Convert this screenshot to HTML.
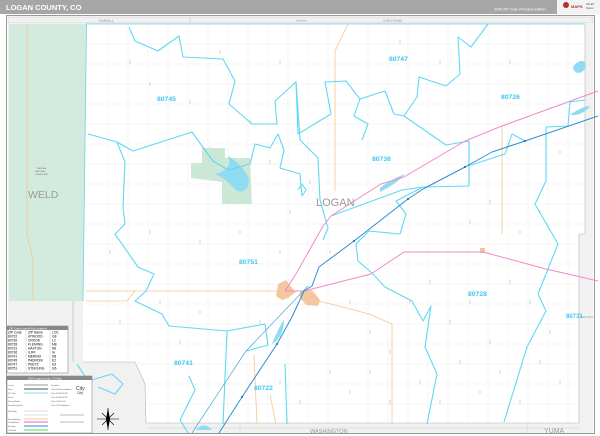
<!DOCTYPE html>
<html><head><meta charset="utf-8"><style>
html,body{margin:0;padding:0;background:#fff}
svg{display:block}
text{font-family:"Liberation Sans",sans-serif}
</style></head><body>
<svg width="600" height="436" viewBox="0 0 600 436" xmlns="http://www.w3.org/2000/svg">
<rect width="600" height="436" fill="#fff"/>
<!-- header -->
<rect x="0" y="0" width="600" height="14" fill="#a6a6a6"/>
<text x="6" y="10" font-size="7.5" font-weight="bold" fill="#fff">LOGAN COUNTY, CO</text>
<text x="494" y="10.5" font-size="3.6" fill="#fff">2026 ZIP Code Premium Edition</text>
<rect x="557" y="0" width="43" height="14" fill="#f3f3f3"/>
<circle cx="566" cy="5" r="3" fill="#c0282d"/><text x="571" y="8" font-size="4" font-weight="bold" fill="#c0282d">MAPS</text>
<text x="586" y="5" font-size="2.5" fill="#555">SALES</text><text x="586" y="9" font-size="2.5" fill="#555">Market</text>

<!-- frame -->
<rect x="6.5" y="15.5" width="588" height="418" fill="#fff" stroke="#9a9a9a" stroke-width="1"/>
<rect x="8" y="17" width="585" height="6" fill="#f1f1f1" stroke="#bbb" stroke-width="0.4"/>
<line x1="190" y1="17" x2="190" y2="23" stroke="#bbb" stroke-width="0.4"/>
<text x="99" y="22" font-size="3.5" fill="#999">KIMBALL</text>
<text x="296" y="21.5" font-size="2.5" fill="#999">Nebraska</text>
<text x="383" y="22" font-size="3.5" fill="#999">CHEYENNE</text>
<!-- neighbor regions -->
<path d="M8,301 L83,301 L83,362 L135,362 L145,384 L146,423 L579,423 L579,234 L585,234 L585,24 L593,24 L593,433 L8,433 Z" fill="#f1f1f1"/>
<polygon points="8.5,24 86.5,24 83,301 8.5,301" fill="#d3ebdf"/>
<path d="M73,301 L73,362 M83,362 L135,362 L145,384 L146,423 L579,423 L579,234 L585,234 L585,24" fill="none" stroke="#b5b5b5" stroke-width="0.6"/>
<line x1="86.5" y1="24" x2="83" y2="301" stroke="#6fd0e8" stroke-width="0.8"/>
<line x1="86" y1="24" x2="585" y2="24" stroke="#6fd0e8" stroke-width="0.8"/>
<text x="28" y="198" font-size="10.5" fill="#9a9a9a">WELD</text>
<text x="37" y="169" font-size="2.2" fill="#777">PAWNEE</text>
<text x="35" y="172" font-size="2.2" fill="#777">NATIONAL</text>
<text x="35" y="175" font-size="2.2" fill="#777">GRASSLAND</text>
<text x="310" y="433" font-size="5.5" fill="#999">WASHINGTON</text>
<text x="544" y="433" font-size="7" fill="#999">YUMA</text>
<text x="580" y="318" font-size="3" fill="#999">PHILLIPS</text>
<line x1="146" y1="428" x2="579" y2="428" stroke="#c8c8c8" stroke-width="0.4"/>
<line x1="240" y1="424" x2="240" y2="433" stroke="#c8c8c8" stroke-width="0.4"/>
<line x1="527" y1="424" x2="527" y2="433" stroke="#c8c8c8" stroke-width="0.4"/>

<!-- road grid -->
<g stroke="#ececec" stroke-width="0.5">
<path d="M108,24V423M128,24V423M148,24V362M168,24V423M188,24V423M208,24V423M228,24V423M248,24V423M268,24V423M288,24V423M308,24V423M328,24V423M368,24V423M388,24V423M408,24V423M428,24V423M448,24V423M468,24V423M488,24V423M508,24V423M528,24V423M548,24V423M568,24V423"/>
<path d="M86,44H585M86,64H585M86,84H585M86,104H585M86,124H585M86,144H585M86,164H585M86,184H585M86,204H585M86,224H585M86,244H579M86,264H579M86,284H579M86,304H579M86,324H579M86,344H579M86,364H579M146,384H579M146,404H579"/>
</g>
<g stroke="#aaa" stroke-width="0.5">
<path d="M130,60v4M150,82v4M190,100v4M210,146v4M250,120v4M270,160v4M290,210v4M310,180v4M330,250v4M350,300v4M370,330v4M390,350v4M410,300v4M430,280v4M450,320v4M470,300v4M490,340v4M510,280v4M530,300v4M550,330v4M420,380v4M440,400v4M460,360v4M480,390v4M500,370v4M520,400v4M540,360v4M560,380v4M200,310v4M180,340v4M160,300v4M260,320v4M280,380v4M300,400v4M330,370v4M350,390v4M370,370v4M390,400v4M470,220v4M490,200v4M520,230v4M540,210v4M560,150v4M510,60v4M440,60v4M400,40v4M280,60v4M220,50v4M150,230v4M200,240v4M240,230v4M280,250v4M110,250v4M120,320v4"/>
</g>

<!-- orange roads -->
<g fill="none" stroke="#f6c68c" stroke-width="0.8">
<path d="M348,24 L335,51 L335,191"/>
<path d="M86,291 L285,291"/>
<path d="M135,291 L127,301 L86,301"/>
<path d="M304,297 L369,314 L392,324 L392,424"/>
<path d="M502,126 L502,234"/>
<path d="M27,24 L27,234 L33,260 L33,301"/>
<path d="M254,355 L257,424"/>
<path d="M270,395 L276,424"/>
</g>

<!-- park & lakes -->
<polygon points="202,148 225,148 225,158 250,158 252,204 222,204 222,182 191,178 191,163 202,163" fill="#cde7d6"/>
<path d="M228,156 C236,160 244,170 248,176 C252,190 240,196 234,188 C228,182 222,176 214,174 C226,172 232,166 228,156Z" fill="#8fdcf2"/>
<path d="M380,188 C390,180 400,176 405,174 C398,182 388,188 380,192Z" fill="#8fdcf2"/>
<path d="M573,67 C578,60 585,58 586,66 C584,74 574,76 573,67Z" fill="#8fdcf2"/>
<path d="M274,339 C278,330 282,322 284,320 C284,330 280,340 272,344Z" fill="#8fdcf2"/>
<path d="M196,430 C200,424 208,424 212,430Z" fill="#8fdcf2"/>
<path d="M570,115 C576,110 586,106 590,106 C586,112 578,116 570,115Z" fill="#8fdcf2"/>
<!-- towns -->
<path d="M278,284 L286,280 L292,288 L296,292 L288,298 L282,300 L276,296Z" fill="#f5c7a0"/>
<path d="M300,292 L312,290 L320,300 L318,306 L306,305 L300,298Z" fill="#f5c7a0"/>
<rect x="480" y="248" width="5" height="5" fill="#f0c4a0"/>

<!-- zip boundaries -->
<g fill="none" stroke="#5fd8f4" stroke-width="1.1" stroke-linejoin="round">
<path d="M129,27 L135,41 L158,51 L179,36 L183,57 L223,59 L235,81 L229,104 L252,124 L277,124 L275,101 L296,82 L298,134 L331,114 L325,82 L346,81 L360,99 L385,91 L394,114 L404,116 L417,97 L419,77 L446,86 L460,74 L458,37 L471,47 L488,24"/>
<path d="M88,134 L117,142 L133,151 L192,132 L213,161 L228,170 L250,164 L255,144 L270,148 L278,134 L284,150 L280,168 L300,174 L302,196 L306,190 L302,184 L298,190"/>
<path d="M117,142 L125,162 L123,207 L125,224 L115,234 L138,267 L154,274 L146,291 L135,301 L162,314 L169,326 L227,331 L265,324 L268,345 L246,351"/>
<path d="M296,82 L300,140 L318,158 L320,200 L328,228 L323,240"/>
<path d="M404,116 L446,145 L469,141 L469,186 L423,187 L396,201 L406,214 L400,234 L369,231 L356,244 L358,261 L373,274 L385,287 L412,301 L423,321 L431,306 L425,347 L437,374 L427,424"/>
<path d="M331,216 L402,190 L423,187"/>
<path d="M546,127 L546,181 L535,204 L558,244 L538,294 L546,311 L527,347 L504,422"/>
<path d="M525,141 L512,134 L505,154 L468,166"/>
<path d="M585,100 L570,102 L568,126 L546,127"/>
<path d="M227,331 L223,424"/>
<path d="M285,364 L287,424"/>
<path d="M77,364 L88,381 L112,374 L123,384 L115,394 L98,387"/>
<path d="M189,376 L195,390 L180,420 L188,433"/>
<path d="M360,99 L354,116 L368,124 L362,140"/>
</g>

<!-- highways -->
<g fill="none" stroke-width="1" stroke-linejoin="round">
<path d="M598,91 L502,126 L465,141 L404,177 L381,184 L362,196 L331,216 L323,226 L296,274 L285,291" stroke="#ef8ac8"/>
<path d="M285,291 L304,291 L371,274 L404,252 L483,252 L546,269 L598,281" stroke="#ef8ac8"/>
<path d="M598,116 L525,141 L492,152 L465,167 L423,189 L408,199 L354,241 L319,267 L312,286 L304,291 L292,317 L277,344 L242,397 L219,433" stroke="#2b8ed3"/>
<path d="M308,286 L246,351 L192,433" stroke="#4aa6d6" stroke-width="0.7"/>
</g>
<g fill="#1e5e9c"><circle cx="525" cy="141" r="1"/><circle cx="465" cy="167" r="1"/><circle cx="408" cy="199" r="1"/><circle cx="354" cy="241" r="1"/><circle cx="277" cy="344" r="1"/><circle cx="242" cy="397" r="1"/></g>

<!-- zip labels -->
<g font-size="6.8" fill="#3fc6f0" font-weight="bold">
<text x="389" y="61">80747</text>
<text x="501" y="99">80726</text>
<text x="157" y="101">80745</text>
<text x="372" y="161">80736</text>
<text x="239" y="264">80751</text>
<text x="468" y="296">80728</text>
<text x="566" y="318" font-size="6">80731</text>
<text x="174" y="365">80741</text>
<text x="254" y="390">80722</text>
</g>
<text x="316" y="206" font-size="11" fill="#9a9a9a">LOGAN</text>

<!-- zip index table -->
<rect x="7" y="326" width="61" height="47" fill="#fff" stroke="#777" stroke-width="0.5"/>
<rect x="7" y="326" width="61" height="4" fill="#888"/>
<text x="9" y="329.3" font-size="2.8" fill="#fff">ZIP Code Index/Grid Locations</text>
<g font-size="3.3" fill="#000">
<text x="8" y="333.5">ZIP Code</text><text x="28" y="333.5">ZIP Name</text><text x="52" y="333.5">LOC</text>
<text x="8" y="337.5">80722</text><text x="28" y="337.5">ATWOOD</text><text x="52" y="337.5">G8</text>
<text x="8" y="341.5">80726</text><text x="28" y="341.5">CROOK</text><text x="52" y="341.5">L2</text>
<text x="8" y="345.5">80728</text><text x="28" y="345.5">FLEMING</text><text x="52" y="345.5">M8</text>
<text x="8" y="349.5">80731</text><text x="28" y="349.5">HAXTUN</text><text x="52" y="349.5">N9</text>
<text x="8" y="353.5">80736</text><text x="28" y="353.5">ILIFF</text><text x="52" y="353.5">I4</text>
<text x="8" y="357.5">80741</text><text x="28" y="357.5">MERINO</text><text x="52" y="357.5">D8</text>
<text x="8" y="361.5">80745</text><text x="28" y="361.5">PADRONI</text><text x="52" y="361.5">E2</text>
<text x="8" y="365.5">80747</text><text x="28" y="365.5">PEETZ</text><text x="52" y="365.5">H2</text>
<text x="8" y="369.5">80751</text><text x="28" y="369.5">STERLING</text><text x="52" y="369.5">G6</text>
</g>
<line x1="26" y1="330" x2="26" y2="373" stroke="#999" stroke-width="0.3"/>
<line x1="50" y1="330" x2="50" y2="373" stroke="#999" stroke-width="0.3"/>

<!-- legend -->
<rect x="7" y="376" width="85" height="57" fill="#fff" stroke="#777" stroke-width="0.5"/>
<rect x="7" y="376" width="85" height="4" fill="#888"/>
<text x="28" y="379.3" font-size="2.6" fill="#fff">2026 Logan County, CO Map</text>
<g stroke-width="1">
<line x1="24" y1="385" x2="48" y2="385" stroke="#999"/>
<line x1="24" y1="389" x2="48" y2="389" stroke="#777" stroke-width="1.3"/>
<line x1="24" y1="393" x2="48" y2="393" stroke="#7fdff3"/>
<line x1="24" y1="411" x2="48" y2="411" stroke="#f7d0d0"/>
<line x1="24" y1="415" x2="48" y2="415" stroke="#cfe6f3"/>
<line x1="24" y1="419" x2="48" y2="419" stroke="#f6c68c"/>
<line x1="24" y1="422" x2="48" y2="422" stroke="#ef5fc0"/>
<line x1="24" y1="426" x2="48" y2="426" stroke="#2b8ed3"/>
<line x1="24" y1="430" x2="48" y2="430" stroke="#55d455"/>
</g>
<g font-size="1.8" fill="#555">
<text x="8" y="386">County</text><text x="8" y="390">State</text><text x="8" y="394">ZIP Code</text><text x="8" y="398">Streets</text><text x="8" y="402">Primary Roads</text><text x="8" y="406">Secondary Roads</text><text x="8" y="412">Rail Roads</text><text x="8" y="420">State Highways</text><text x="8" y="423">US Highways</text><text x="8" y="427">Interstate</text><text x="8" y="431">Toll Roads</text>
<text x="51" y="386">Population</text><text x="51" y="390">Cities 100,000 and Above</text><text x="51" y="394">Cities 25,000-99,999</text><text x="51" y="398">Cities 10,000-24,999</text><text x="51" y="402">Cities 1,000-9,999</text><text x="51" y="406">Cities 1-999 and Above</text>
</g>
<text x="76" y="390" font-size="5" fill="#333">City</text>
<text x="77" y="394" font-size="3.5" fill="#333">City</text>
<line x1="60" y1="415" x2="84" y2="415" stroke="#555" stroke-width="0.4"/>
<line x1="60" y1="422" x2="84" y2="422" stroke="#555" stroke-width="0.4"/>
<!-- compass -->
<g stroke="#000" stroke-width="0.6">
<line x1="108" y1="408" x2="108" y2="430"/><line x1="97" y1="419" x2="119" y2="419"/>
<line x1="102" y1="413" x2="114" y2="425"/><line x1="114" y1="413" x2="102" y2="425"/>
</g>
<polygon points="108,408 110,419 108,430 106,419" fill="#000"/>
</svg>
</body></html>
